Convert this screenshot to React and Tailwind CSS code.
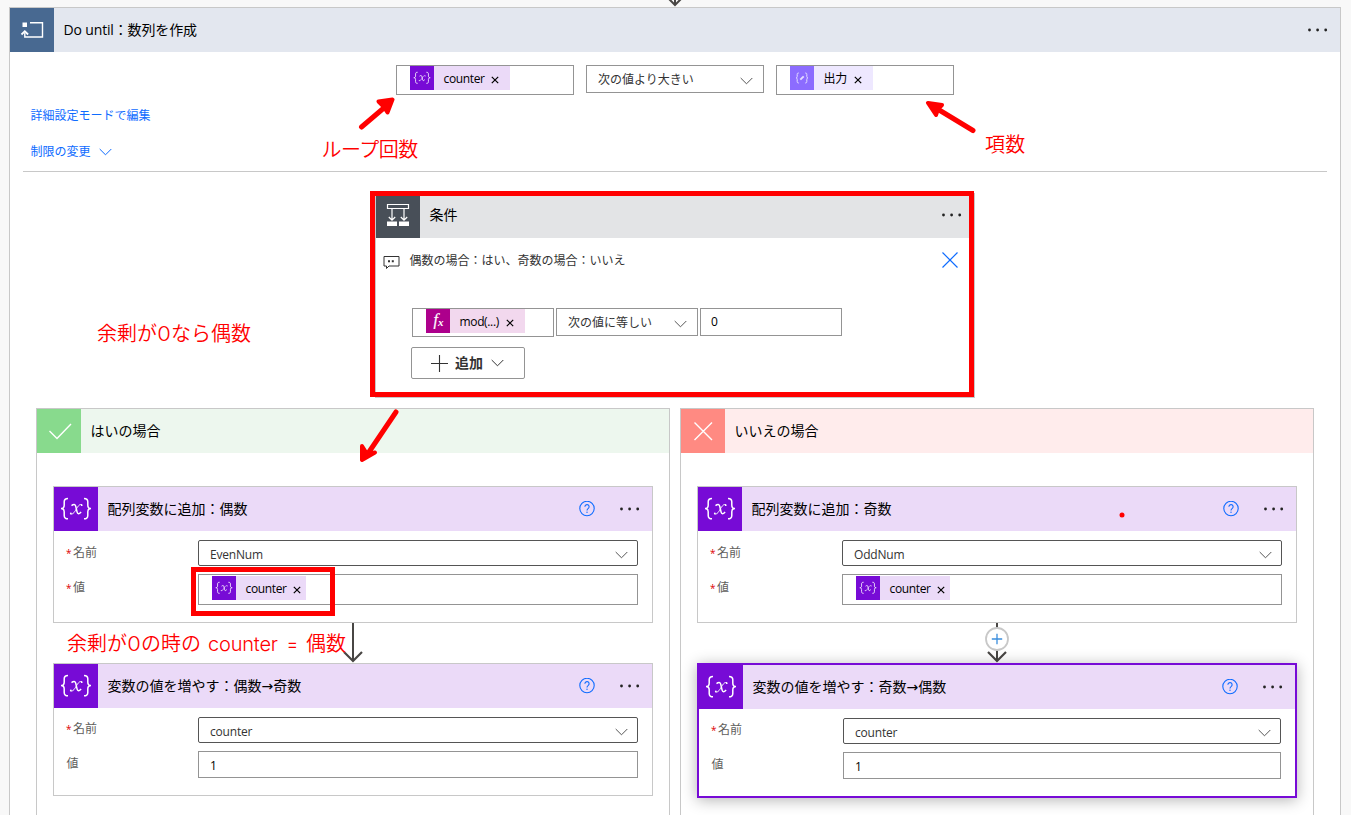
import clsx from 'clsx';

// Three dots menu at the right edge of a header
function MoreIcon() {
  return (
    <svg width="20" height="4" viewBox="0 0 20 4" fill="#222" aria-label="More">
      <circle cx="1.5" cy="2" r="1.4" />
      <circle cx="9.600" cy="2" r="1.4" />
      <circle cx="17.700" cy="2" r="1.4" />
    </svg>
  );
}

function HelpIcon() {
  return (
    <svg width="16" height="16" viewBox="0 0 16 16" fill="none" stroke="#0f6cff">
      <circle cx="8" cy="7.500" r="7.2" strokeWidth="1.1" />
      <path d="M5.9 5.8a2.1 2.1 0 1 1 3.4 1.6c-.8.6-1.3 1-1.3 2.1" strokeWidth="1.1" />
      <circle cx="8" cy="11.300" r=".7" fill="#0f6cff" stroke="none" />
    </svg>
  );
}

function Chevron({ className = 'text-[#555]' }) {
  return (
    <svg className={className} width="13" height="8" viewBox="0 0 13 8" fill="none" stroke="currentColor">
      <path d="M.7 1l5.8 5.8L12.3 1" strokeWidth="1" />
    </svg>
  );
}

function VariableIcon({ className }) {
  return (
    <svg className={className} viewBox="0 0 44 44" fill="none" stroke="#fff">
      <path d="M14 11.500c-3 0-3.800 1-3.800 3.300v3.400c0 2-.8 3.300-3.200 3.300 2.400 0 3.200 1.300 3.200 3.300v3.600c0 2.400.8 3.400 3.800 3.400" strokeWidth="1.5" />
      <path d="M30 11.500c3 0 3.800 1 3.800 3.300v3.400c0 2 .8 3.300 3.200 3.300-2.400 0-3.200 1.300-3.200 3.300v3.600c0 2.400-.8 3.400-3.800 3.400" strokeWidth="1.5" />
      <path d="M17.500 18.600c2.200-1.700 3.700-1.500 4.200.6l1.400 6c.5 2.100 1.900 2.200 4-.3" strokeWidth="1.5" />
      <path d="M28 17.700c-2.300-.8-3.600.9-5.300 3.700-1.900 3.100-3.300 6.300-6.300 5.500" strokeWidth="1" />
      <circle cx="27.700" cy="18.200" r=".9" fill="#fff" stroke="none" />
      <circle cx="16.800" cy="26.400" r=".9" fill="#fff" stroke="none" />
    </svg>
  );
}

function OutputIcon({ className }) {
  return (
    <svg className={className} viewBox="0 0 24 24" fill="none" stroke="#e4dcff">
      <path d="M8.800 7c-1.300 0-1.600.4-1.600 1.400v2c0 .9-.3 1.500-1.200 1.500.9 0 1.200.6 1.200 1.500v2.100c0 1 .3 1.500 1.600 1.500M15.200 7c1.300 0 1.600.4 1.600 1.400v2c0 .9.3 1.500 1.200 1.500-.9 0-1.200.6-1.200 1.500v2.100c0 1-.3 1.500-1.600 1.500" />
      <path d="M10.300 13.700l3.400-3.400" strokeWidth="1.900" />
    </svg>
  );
}

function FxIcon({ className }) {
  return (
    <svg className={className} viewBox="0 0 24 24" fill="#fff">
      <text x="7.500" y="15.500" fontFamily="Liberation Serif, serif" fontStyle="italic" fontSize="16" stroke="#fff" strokeWidth=".2">f</text>
      <text x="12" y="17" fontFamily="Liberation Serif, serif" fontStyle="italic" fontWeight="bold" fontSize="11">x</text>
    </svg>
  );
}

const chipKinds = {
  variable: { icon: VariableIcon, tile: 'bg-[#770bd6]', body: 'bg-[#ebdaf8]' },
  output: { icon: OutputIcon, tile: 'bg-[#8c6cff]', body: 'bg-[#eee8ff]' },
  fx: { icon: FxIcon, tile: 'bg-[#ad008c]', body: 'bg-[#f2d8ee]' },
};

function Chip({ kind, label, className }) {
  const { icon: Icon, tile, body } = chipKinds[kind];
  return (
    <span className={clsx('flex h-6 items-center text-xs text-black', body, className)}>
      <span className={clsx('h-6 w-6 shrink-0', tile)}>
        <Icon className="h-6 w-6" />
      </span>
      <span className="ml-[9.500px] pt-[2px] whitespace-nowrap leading-6 tracking-[-0.35px]">{label}</span>
      <svg className="mt-[3px] ml-auto" width="8" height="8" viewBox="0 0 8 8" stroke="#000" strokeWidth="1.2">
        <path d="M.8.8l6.400 6.400M7.200.8L.8 7.200" />
      </svg>
    </span>
  );
}

function Dropdown({ label, className, textClass = 'pt-[2px]' }) {
  return (
    <div className={clsx('flex items-center justify-between border bg-white text-xs text-[#333]', className)}>
      <span className={clsx('whitespace-nowrap', textClass)}>{label}</span>
      <Chevron className="mt-1 text-[#555]" />
    </div>
  );
}

function Required() {
  return <span className="mr-[2.500px] inline-block w-[4.500px] text-[10px] text-[#d00]">*</span>;
}

function VariableCard({ title, tail, name, chip, value, selected }) {
  return (
    <div
      className={clsx(
        'w-[600px] bg-white',
        selected
          ? 'h-[135px] border-2 border-[#770bd6] shadow-[0_2px_14px_rgba(0,0,0,0.3)]'
          : 'border border-[#c8c8c8]',
        !selected && (chip ? 'h-[137px]' : 'h-[133px]')
      )}
    >
      <div className="flex h-11 items-center bg-[#ebdaf8] pr-3">
        <div className="h-11 w-11 shrink-0 bg-[#770bd6]">
          <VariableIcon className="h-11 w-11" />
        </div>
        <h3 className="ml-[9.500px] flex-1 text-sm text-black">
          {title}
          {tail && (
            <>
              <span className="font-['DejaVu_Sans'] leading-none">→</span>
              {tail}
            </>
          )}
        </h3>
        <HelpIcon />
        <span className="ml-[25px]">
          <MoreIcon />
        </span>
      </div>
      <div className="flex flex-col gap-2 pt-[9px] pr-3.5 pl-3 text-xs text-[#605e5c]">
        <div className="flex">
          <label className={clsx('w-[132px] leading-[18px]', chip ? 'pt-1' : 'pt-[3px]')}>
            <Required />名前
          </label>
          <Dropdown
            label={name}
            className="h-[26px] flex-1 rounded-xs border-[#555] pr-[9px] pl-[11px]"
            textClass="pt-[3px] tracking-[-0.2px]"
          />
        </div>
        <div className="flex">
          <label className={clsx('w-[132px] leading-[18px]', chip ? 'pt-[5px]' : 'pt-1 pl-[.5px]')}>
            {chip && <Required />}値
          </label>
          {chip ? (
            <div className="h-[31px] flex-1 border border-[#949494] pt-px pl-[13px]">
              <Chip kind="variable" label={chip} className="w-[94px] pr-[5px]" />
            </div>
          ) : (
            <div className="h-[27px] flex-1 border border-[#949494] pt-[2px] pl-[11px] leading-6 text-black">{value}</div>
          )}
        </div>
      </div>
    </div>
  );
}

function Connector({ withAdd }) {
  return (
    <svg className="block" width="24" height="40" viewBox="0 0 24 40" fill="none">
      <path d="M12 0v38" stroke="#484644" strokeWidth="2" />
      <path d="M3 29l9 9 9-9" stroke="#484644" strokeWidth="2.200" />
      {withAdd && (
        <>
          <circle cx="12" cy="16" r="11" fill="#fff" stroke="#c8c8c8" strokeWidth="1.800" />
          <path d="M6.800 16h10.400M12 10.800v10.400" stroke="#3b8ede" strokeWidth="1.300" />
        </>
      )}
    </svg>
  );
}

function Branch({ title, yes, children }) {
  return (
    <section className="w-[634px] border border-b-0 border-[#c8c8c8] bg-white">
      <div className={clsx('flex h-11 items-center', yes ? 'bg-[#edf7ee]' : 'bg-[#ffecec]')}>
        <div className={clsx('flex h-11 w-11 items-center justify-center', yes ? 'bg-[#88da8d]' : 'bg-[#ff8a82]')}>
          <svg width="44" height="44" viewBox="0 0 44 44" fill="none" stroke="#fff" strokeWidth="1.400">
            {yes ? <path d="M12.500 22l7.500 7.500L34 15" /> : <path d="M13.500 13.500l17.500 17.500M31 13.500L13.500 31" />}
          </svg>
        </div>
        <h2 className="ml-[9.500px] text-sm text-black">{title}</h2>
      </div>
      <div className="flex flex-col items-center pt-[33px]">{children}</div>
    </section>
  );
}

function ConditionCard() {
  return (
    <div className="relative h-[205px] w-[600px] border border-[#c8c8c8] bg-white">
      <div className="flex h-11 items-center bg-[#e3e4e6] pr-3">
        <div className="h-11 w-11 bg-[#484f58]">
          <svg width="44" height="44" viewBox="0 0 44 44" fill="none" stroke="#fff">
            <path d="M11.500 10.500h21v4h-21zM16 14.500v12M28 14.500v12M12.800 23l3.200 3.200 3.200-3.200M24.800 23l3.200 3.200 3.200-3.200" strokeWidth="1.200" />
            <path d="M11 27.500h10v4.500H11zM23 27.500h10v4.500H23z" fill="#fff" stroke="none" />
          </svg>
        </div>
        <h2 className="ml-[9.500px] flex-1 pb-[2px] text-sm text-black">条件</h2>
        <div className="pb-[2px]">
          <MoreIcon />
        </div>
      </div>
      <div className="flex h-11 items-center pr-4 pl-[7px]">
        <svg className="mt-1" width="17" height="15" viewBox="0 0 17 15" fill="none" stroke="#333">
          <path d="M1 1.500h15v9.500H6L3.500 13.500V11H1z" />
          <path d="M6 5.200v2M9.800 5.200v2" strokeWidth="2" />
        </svg>
        <p className="ml-[9.500px] flex-1 pt-[2px] text-xs text-[#333]">偶数の場合：はい、奇数の場合：いいえ</p>
        <svg width="16" height="16" viewBox="0 0 16 16" stroke="#0f6cff" strokeWidth="1.200">
          <path d="M.5.5l15 15M15.500.5l-15 15" />
        </svg>
      </div>
      <div className="flex items-start gap-[2px] pt-[26px] pl-9">
        <div className="h-[29px] w-[142px] border border-[#949494] pl-[13px]">
          <Chip kind="fx" label="mod(...)" className="w-[99px] pr-[11px]" />
        </div>
        <Dropdown label="次の値に等しい" className="h-7 w-[142px] border-[#949494] pr-2.5 pl-[11px]" />
        <div className="h-7 w-[142px] border border-[#949494] pl-2.5 text-xs leading-[26px] text-black">0</div>
      </div>
      <button className="mt-2.5 ml-[35px] flex h-8 w-[114px] items-center rounded-xs border border-[#949494] pl-[19px] text-sm font-semibold text-[#333]">
        <svg width="17" height="17" viewBox="0 0 17 17" stroke="#333" strokeWidth="1.100">
          <path d="M0 8.500h17M8.500 0v17" />
        </svg>
        <span className="ml-[7px]">追加</span>
        <Chevron className="ml-2 text-[#333]" />
      </button>
      <div className="absolute -top-[3px] -left-[6px] h-[206px] w-[604px] border-[5px] border-[#f00]" />
    </div>
  );
}

// The notes use a round, wide zero
function Zero() {
  return <span className="inline-block w-3.5 scale-x-110 text-center font-light">0</span>;
}

// Hand-drawn red notes lying on top of the flow
function Annotations() {
  return (
    <div className="pointer-events-none absolute inset-0 font-['Inter','Noto_Sans_CJK_JP',sans-serif] text-xl leading-6 font-[350] whitespace-nowrap text-[#f00]">
      <svg className="absolute inset-0" width="1351" height="815" fill="#f00" stroke="#f00" strokeLinecap="round" strokeLinejoin="round">
        <path d="M361.500 127L385 107M973 130.500L940 110.500M396 412L369 452" strokeWidth="5" />
        <path d="M392.500 99.500l-14 2 5 5 4 6zM928 103l14 2-4 4-2 6zM362 460v-14l5 8 8-1.500z" strokeWidth="4" />
        <circle cx="1122" cy="515" r="2.500" stroke="none" />
      </svg>
      <span className="absolute top-[138px] left-[321.500px] tracking-[-0.5px]">ループ回数</span>
      <span className="absolute top-[133px] left-[985px] tracking-[0.3px]">項数</span>
      <span className="absolute top-[322px] left-[97px]">
        余剰が<Zero />なら偶数
      </span>
      <span className="absolute top-[632px] left-[67px]">
        余剰が<Zero />の時の
        <span className="ml-[7px] inline-block w-[70px] tracking-[-0.2px]">counter</span>
        <span className="ml-2 inline-block w-3 scale-x-90">=</span>
        <span className="ml-2">偶数</span>
      </span>
      <div className="absolute top-[567px] left-[191px] h-[49px] w-[144px] border-[5px] border-[#f00]" />
    </div>
  );
}

function App() {
  return (
    <main className="relative h-[815px] w-[1351px] overflow-hidden bg-[#f8f8f8] font-['Open_Sans','Noto_Sans_CJK_JP',sans-serif]">
      <div className="flex h-[7px] justify-center pr-[2px]">
        <svg width="24" height="7" viewBox="0 0 24 7" fill="none" stroke="#484644" strokeWidth="2">
          <path d="M12 0v5M6 -1l6 6 6-6" />
        </svg>
      </div>
      <div className="ml-[9px] flex h-[820px] w-[1332px] flex-col border border-[#c8c8c8] bg-white">
        <header className="flex h-11 shrink-0 items-center bg-[#e3e7ef] pr-3">
          <div className="h-11 w-11 bg-[#486991]">
            <svg width="44" height="44" viewBox="0 0 44 44" fill="none" stroke="#fff" strokeWidth="1.400">
              <path d="M20 14.700h12.500v14.300H14.800v-4.500" />
              <path d="M11.500 26.500l3.300-3.300 3.300 3.300" strokeWidth="1.800" />
              <path d="M12.500 14.500h4.500v4.500h-4.500z" fill="#fff" stroke="none" />
            </svg>
          </div>
          <h1 className="ml-[9.500px] flex-1 text-sm tracking-[-0.15px] text-black">Do until：数列を作成</h1>
          <MoreIcon />
        </header>

        <div className="mx-[13px] h-[120px] shrink-0 border-b border-[#c8c8c8] pt-[13px] text-xs">
          <div className="flex items-start justify-center gap-3">
            <div className="h-[30px] w-[178px] border border-[#949494] pl-[13px]">
              <Chip kind="variable" label="counter" className="w-[100px] pr-[11px]" />
            </div>
            <Dropdown label="次の値より大きい" className="h-7 w-[178px] border-[#949494] pr-2.5 pl-[11px]" />
            <div className="h-[30px] w-[178px] border border-[#949494] pl-[13px]">
              <Chip kind="output" label="出力" className="w-[83px] pr-[11px]" />
            </div>
          </div>
          <div className="mt-[11px] ml-[7.500px] flex flex-col gap-4 text-[#0f6cff]">
            <a className="leading-5">詳細設定モードで編集</a>
            <a className="flex items-center gap-2 leading-5">
              制限の変更
              <Chevron className="text-[#0f6cff]" />
            </a>
          </div>
        </div>

        <div className="mt-[21px] flex justify-center">
          <ConditionCard />
        </div>

        <div className="mt-2.5 flex flex-1 gap-2.5 pl-[26px]">
          <Branch title="はいの場合" yes>
            <VariableCard title="配列変数に追加：偶数" name="EvenNum" chip="counter" />
            <Connector />
            <VariableCard title="変数の値を増やす：偶数" tail="奇数" name="counter" value="1" />
          </Branch>
          <Branch title="いいえの場合">
            <VariableCard title="配列変数に追加：奇数" name="OddNum" chip="counter" />
            <Connector withAdd />
            <VariableCard title="変数の値を増やす：奇数" tail="偶数" name="counter" value="1" selected />
          </Branch>
        </div>
      </div>
      <Annotations />
    </main>
  );
}

export default App;
